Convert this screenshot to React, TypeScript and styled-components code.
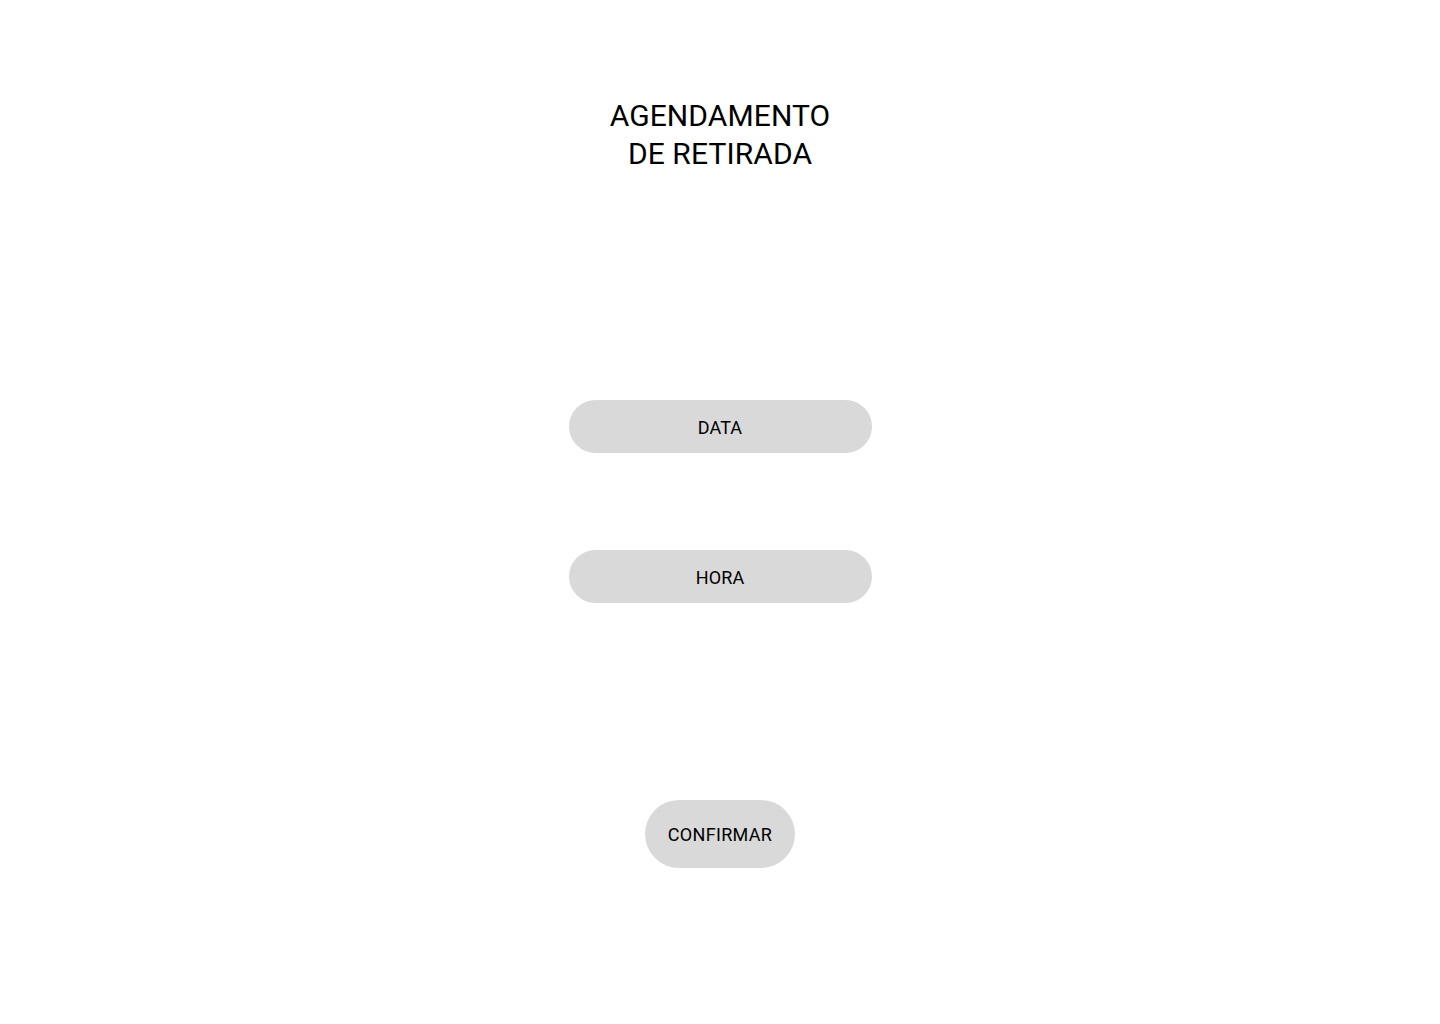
import React from "react";
import styled, { createGlobalStyle } from "styled-components";

const GlobalStyle = createGlobalStyle`
  html, body { margin: 0; padding: 0; background: #ffffff; }
  body { font-family: Roboto, "Noto Sans", sans-serif; color: #000; }
`;

const Page = styled.main`
  width: 1440px;
  min-height: 1024px;
  display: flex;
  flex-direction: column;
  align-items: center;
  padding-top: 97px;
  box-sizing: border-box;
`;

const Title = styled.h1`
  margin: 0;
  font-size: 30px;
  line-height: 38px;
  font-weight: 400;
  letter-spacing: 0.1px;
  text-align: center;
`;

const Form = styled.div`
  display: flex;
  flex-direction: column;
  align-items: center;
  margin-top: 227px;
`;

const FieldButton = styled.button<{ $gapTop?: number }>`
  width: 303px;
  height: 53px;
  margin-top: ${(p) => p.$gapTop ?? 0}px;
  border: none;
  border-radius: 27px;
  background: #d9d9d9;
  font-family: Roboto, "Noto Sans", sans-serif;
  font-size: 18px;
  letter-spacing: 0.1px;
  color: #000;
  display: flex;
  align-items: center;
  justify-content: center;
  padding: 2px 0 0;
  cursor: pointer;
`;

const ConfirmButton = styled.button`
  margin-top: 197px;
  width: 150px;
  height: 68px;
  border: none;
  border-radius: 34px;
  background: #d9d9d9;
  font-family: Roboto, "Noto Sans", sans-serif;
  font-size: 18px;
  letter-spacing: 0.3px;
  color: #000;
  display: flex;
  align-items: center;
  justify-content: center;
  padding: 0;
  cursor: pointer;
`;

export default function App() {
  return (
    <>
      <GlobalStyle />
      <Page>
        <Title>
          AGENDAMENTO
          <br />
          DE RETIRADA
        </Title>
        <Form>
          <FieldButton>DATA</FieldButton>
          <FieldButton $gapTop={97}>HORA</FieldButton>
          <ConfirmButton>CONFIRMAR</ConfirmButton>
        </Form>
      </Page>
    </>
  );
}
